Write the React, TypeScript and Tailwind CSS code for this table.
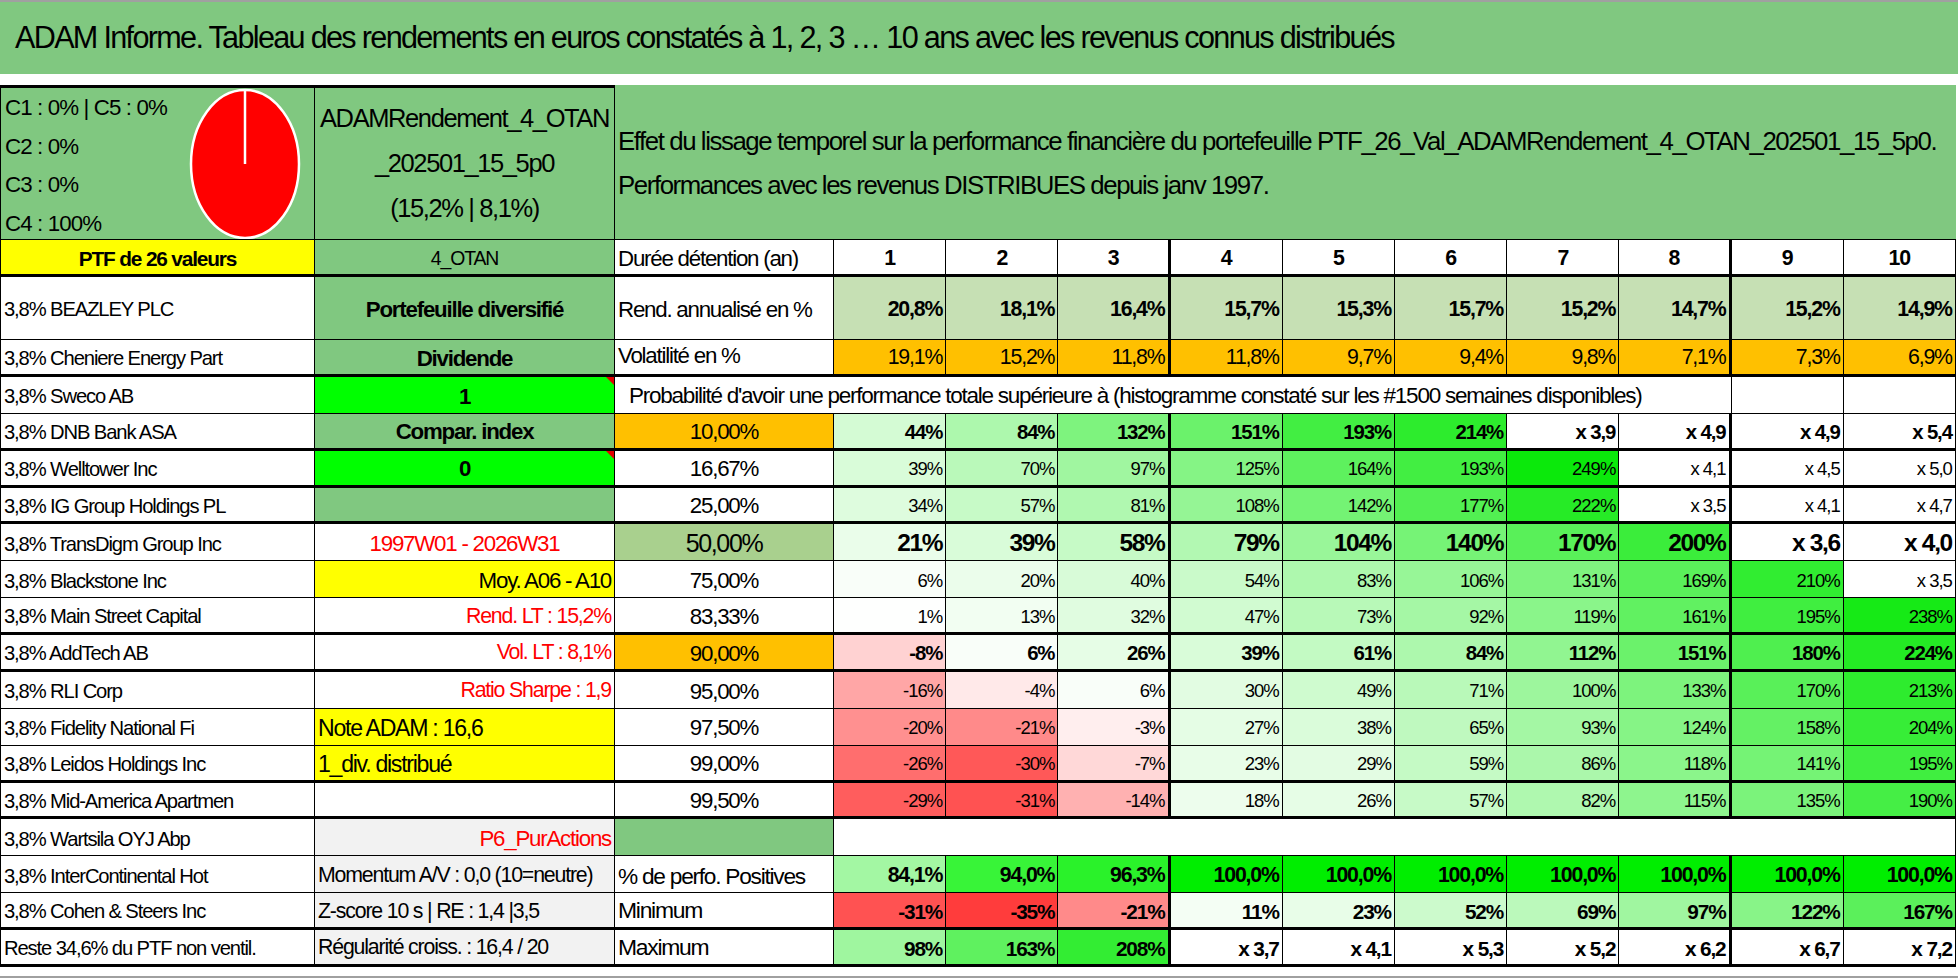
import React from 'react';

const GREEN = 'bg-[#80c880]';

type HeatRow = {
  name: string;
  c2: string;
  c2cls: string;
  tri?: boolean;
  p: string;
  pcls: string;
  vals: string[];
  bold?: boolean;
  big?: boolean;
  thick: boolean;
};

const heatRows: HeatRow[] = [
  { name: '3,8% DNB Bank ASA', c2: 'Compar. index', c2cls: 'bg-[#80c880] justify-center font-bold text-[22.3px]', p: '10,00%', pcls: 'bg-[#ffc000] text-[22.3px]', vals: ['44%', '84%', '132%', '151%', '193%', '214%', 'x 3,9', 'x 4,9', 'x 4,9', 'x 5,4'], bold: true, thick: true },
  { name: '3,8% Welltower Inc', c2: '0', c2cls: 'bg-[#00ff00] justify-center font-bold text-[22.3px]', tri: true, p: '16,67%', pcls: 'bg-white text-[22.3px]', vals: ['39%', '70%', '97%', '125%', '164%', '193%', '249%', 'x 4,1', 'x 4,5', 'x 5,0'], thick: true },
  { name: '3,8% IG Group Holdings PL', c2: '', c2cls: 'bg-[#80c880]', p: '25,00%', pcls: 'bg-white text-[22.3px]', vals: ['34%', '57%', '81%', '108%', '142%', '177%', '222%', 'x 3,5', 'x 4,1', 'x 4,7'], thick: true },
  { name: '3,8% TransDigm Group Inc', c2: '1997W01 - 2026W31', c2cls: 'bg-white justify-center text-[#ff0000] text-[22.3px]', p: '50,00%', pcls: 'bg-[#a9d08e] text-[25px]', vals: ['21%', '39%', '58%', '79%', '104%', '140%', '170%', '200%', 'x 3,6', 'x 4,0'], bold: true, big: true, thick: false },
  { name: '3,8% Blackstone Inc', c2: 'Moy. A06 - A10', c2cls: 'bg-[#ffff00] justify-end pr-[3px] text-[22.3px]', p: '75,00%', pcls: 'bg-white text-[22.3px]', vals: ['6%', '20%', '40%', '54%', '83%', '106%', '131%', '169%', '210%', 'x 3,5'], thick: false },
  { name: '3,8% Main Street Capital', c2: 'Rend. LT : 15,2%', c2cls: 'bg-white justify-end pr-[3px] text-[#ff0000] text-[21.3px]', p: '83,33%', pcls: 'bg-white text-[22.3px]', vals: ['1%', '13%', '32%', '47%', '73%', '92%', '119%', '161%', '195%', '238%'], thick: true },
  { name: '3,8% AddTech AB', c2: 'Vol. LT : 8,1%', c2cls: 'bg-white justify-end pr-[3px] text-[#ff0000] text-[21.3px]', p: '90,00%', pcls: 'bg-[#ffc000] text-[22.3px]', vals: ['-8%', '6%', '26%', '39%', '61%', '84%', '112%', '151%', '180%', '224%'], bold: true, thick: true },
  { name: '3,8% RLI Corp', c2: 'Ratio Sharpe : 1,9', c2cls: 'bg-white justify-end pr-[3px] text-[#ff0000] text-[21.3px]', p: '95,00%', pcls: 'bg-white text-[22.3px]', vals: ['-16%', '-4%', '6%', '30%', '49%', '71%', '100%', '133%', '170%', '213%'], thick: false },
  { name: '3,8% Fidelity National Fi', c2: 'Note ADAM : 16,6', c2cls: 'bg-[#ffff00] justify-start pl-[3px] text-[23.1px]', p: '97,50%', pcls: 'bg-white text-[22.3px]', vals: ['-20%', '-21%', '-3%', '27%', '38%', '65%', '93%', '124%', '158%', '204%'], thick: false },
  { name: '3,8% Leidos Holdings Inc', c2: '1_div. distribué', c2cls: 'bg-[#ffff00] justify-start pl-[3px] text-[23.1px]', p: '99,00%', pcls: 'bg-white text-[22.3px]', vals: ['-26%', '-30%', '-7%', '23%', '29%', '59%', '86%', '118%', '141%', '195%'], thick: true },
  { name: '3,8% Mid-America Apartmen', c2: '', c2cls: 'bg-white', p: '99,50%', pcls: 'bg-white text-[22.3px]', vals: ['-29%', '-31%', '-14%', '18%', '26%', '57%', '82%', '115%', '135%', '190%'], thick: true },
];

const positives = ['84,1%', '94,0%', '96,3%', '100,0%', '100,0%', '100,0%', '100,0%', '100,0%', '100,0%', '100,0%'];
const positiveColors = ['#a3f7a3', '#38f438', '#2af22a', '#00ee00', '#00ee00', '#00ee00', '#00ee00', '#00ee00', '#00ee00', '#00ee00'];
const minimum = ['-31%', '-35%', '-21%', '11%', '23%', '52%', '69%', '97%', '122%', '167%'];
const maximum = ['98%', '163%', '208%', 'x 3,7', 'x 4,1', 'x 5,3', 'x 5,2', 'x 6,2', 'x 6,7', 'x 7,2'];
const rendements = ['20,8%', '18,1%', '16,4%', '15,7%', '15,3%', '15,7%', '15,2%', '14,7%', '15,2%', '14,9%'];
const volatilites = ['19,1%', '15,2%', '11,8%', '11,8%', '9,7%', '9,4%', '9,8%', '7,1%', '7,3%', '6,9%'];

// couleur de fond façon "échelle de couleurs" Excel
const heat = (s: string) => {
  if (s.startsWith('x')) return '#ffffff';
  const v = parseFloat(s.replace(',', '.'));
  if (v < 0) {
    const t = Math.min(-v / 35, 1);
    const g = Math.round(255 - 195 * t);
    return `rgb(255,${g},${g})`;
  }
  const t = Math.min(v / 250, 1);
  const rb = Math.round(255 * (1 - t * 0.96));
  return `rgb(${rb},${Math.round(255 - 22 * t)},${rb})`;
};

const Cell = ({ className = '', thick = false, thickR = false, children, style }: { className?: string; thick?: boolean; thickR?: boolean; children?: React.ReactNode; style?: React.CSSProperties }) => (
  <div
    style={style}
    className={`relative flex items-center overflow-hidden whitespace-nowrap pt-[3px] tracking-[-0.055em] border-black ${thick ? 'border-b-[3px]' : 'border-b'} ${thickR ? 'border-r-[3px]' : 'border-r'} ${className}`}
  >
    {children}
  </div>
);

const Triangle = () => (
  <svg className="absolute right-0 top-0" width="8" height="8" viewBox="0 0 8 8">
    <polygon points="0,0 8,0 8,8" fill="#e00000" />
  </svg>
);

const NumCells = ({ vals, colors, bg, textCls, thick }: { vals: string[]; colors?: string[]; bg?: string; textCls: string; thick: boolean }) => (
  <>
    {vals.map((v, i) => (
      <Cell
        key={i}
        thick={thick}
        thickR={i === 2 || i === 7}
        className={`justify-end pr-[3px] ${bg ?? ''} ${textCls}`}
        style={colors ? { backgroundColor: colors[i] } : undefined}
      >
        {v}
      </Cell>
    ))}
  </>
);

const Pie = () => (
  <svg width="112" height="152" viewBox="0 0 112 152" className="mr-[13px]">
    <ellipse cx="56" cy="76" rx="54" ry="74" fill="#ff0000" stroke="#ffffff" strokeWidth="2.5" />
    <line x1="56" y1="2" x2="56" y2="76" stroke="#ffffff" strokeWidth="2.5" />
  </svg>
);

export default function App() {
  return (
    <div className="w-[1958px] h-[979px] bg-white text-black overflow-hidden font-['Liberation_Sans',Arial,sans-serif]">
      <div className="h-[2px] bg-[#a0a0a0]" />
      <div className={`h-[72px] ${GREEN} flex items-center pl-[15px] text-[30.6px] tracking-[-0.055em] whitespace-nowrap`}>
        ADAM Informe. Tableau des rendements en euros constatés à 1, 2, 3 … 10 ans avec les revenus connus distribués
      </div>
      <div className="h-[11px] bg-white" />

      <div className="grid w-[1956px] grid-cols-[315px_300px_219px_repeat(10,112.2px)] grid-rows-[155px_37px_63px_repeat(17,36.88px)]">
        {/* Bloc d'en-tête */}
        <Cell className={`${GREEN} border-t-[3px] border-l justify-between items-start !pt-0`}>
          <div className="flex flex-col pl-[4px] pt-[1px] text-[22.3px] leading-[38.5px]">
            <div>C1 : 0% | C5 : 0%</div>
            <div>C2 : 0%</div>
            <div>C3 : 0%</div>
            <div>C4 : 100%</div>
          </div>
          <div className="flex items-center self-center">
            <Pie />
          </div>
        </Cell>
        <Cell className={`${GREEN} border-t-[3px] justify-center text-center text-[25.5px] leading-[45px] !pt-0`}>
          <div>
            ADAMRendement_4_OTAN
            <br />
            _202501_15_5p0
            <br />
            (15,2% | 8,1%)
          </div>
        </Cell>
        <div className={`col-span-11 ${GREEN} flex flex-col justify-center pl-[3px] pt-[2px] text-[25.8px] leading-[44px] tracking-[-0.055em] whitespace-nowrap border-b border-black`}>
          <div>Effet du lissage temporel sur la performance financière du portefeuille PTF_26_Val_ADAMRendement_4_OTAN_202501_15_5p0.</div>
          <div>Performances avec les revenus DISTRIBUES depuis janv 1997.</div>
        </div>

        {/* Durée de détention */}
        <Cell thick className="bg-[#ffff00] border-l justify-center font-bold text-[20.8px]">PTF de 26 valeurs</Cell>
        <Cell thick className={`${GREEN} justify-center text-[19.4px]`}>4_OTAN</Cell>
        <Cell thick className="bg-white pl-[3px] text-[22.3px]">Durée détention (an)</Cell>
        {Array.from({ length: 10 }, (_, i) => (
          <Cell key={i} thick thickR={i === 2 || i === 7} className="bg-white justify-center font-bold text-[21.3px]">
            {i + 1}
          </Cell>
        ))}

        {/* Rendement annualisé */}
        <Cell className="bg-white border-l pl-[3px] text-[20.2px]">3,8% BEAZLEY PLC</Cell>
        <Cell className={`${GREEN} justify-center font-bold text-[22.3px]`}>Portefeuille diversifié</Cell>
        <Cell className="bg-white pl-[3px] text-[22.3px]">Rend. annualisé en %</Cell>
        <NumCells vals={rendements} bg="bg-[#c6e0b4]" textCls="font-bold text-[21.3px]" thick={false} />

        {/* Volatilité */}
        <Cell thick className="bg-white border-l pl-[3px] text-[20.2px]">3,8% Cheniere Energy Part</Cell>
        <Cell thick className={`${GREEN} justify-center font-bold text-[22.3px]`}>Dividende</Cell>
        <Cell thick className="bg-white pl-[3px] text-[22.3px] items-end pb-[1px]">Volatilité en %</Cell>
        <NumCells vals={volatilites} bg="bg-[#ffc000]" textCls="text-[21.3px] items-end" thick />

        {/* Probabilité */}
        <Cell className="bg-white border-l pl-[3px] text-[20.2px]">3,8% Sweco AB</Cell>
        <Cell className="bg-[#00ff00] justify-center font-bold text-[22.3px]">
          1
          <Triangle />
        </Cell>
        <Cell className="col-span-9 bg-white pl-[14px] text-[22.5px]">
          Probabilité d&apos;avoir une performance totale supérieure à (histogramme constaté sur les #1500 semaines disponibles)
        </Cell>
        <Cell className="bg-white" />
        <Cell className="bg-white" />

        {heatRows.map((r) => (
          <React.Fragment key={r.name}>
            <Cell thick={r.thick} className="bg-white border-l pl-[3px] text-[20.2px]">{r.name}</Cell>
            <Cell thick={r.thick} className={r.c2cls}>
              {r.c2}
              {r.tri && <Triangle />}
            </Cell>
            <Cell thick={r.thick} className={`justify-center ${r.pcls}`}>{r.p}</Cell>
            <NumCells
              vals={r.vals}
              colors={r.vals.map(heat)}
              textCls={r.big ? 'font-bold text-[24.5px]' : r.bold ? 'font-bold text-[20.4px]' : 'text-[18.5px]'}
              thick={r.thick}
            />
          </React.Fragment>
        ))}

        {/* Wartsila */}
        <Cell className="bg-white border-l pl-[3px] text-[20.2px]">3,8% Wartsila OYJ Abp</Cell>
        <Cell className="bg-[#f2f2f2] justify-end pr-[3px] text-[#ff0000] text-[22.3px]">P6_PurActions</Cell>
        <Cell className={GREEN} />
        <Cell className="col-span-10 bg-white" />

        {/* % positives */}
        <Cell className="bg-white border-l pl-[3px] text-[20.2px]">3,8% InterContinental Hot</Cell>
        <Cell className="bg-[#f2f2f2] pl-[3px] text-[21.3px]">Momentum A/V : 0,0 (10=neutre)</Cell>
        <Cell className="bg-white pl-[3px] text-[22.7px]">% de perfo. Positives</Cell>
        <NumCells vals={positives} colors={positiveColors} textCls="font-bold text-[21.3px]" thick={false} />

        {/* Minimum */}
        <Cell thick className="bg-white border-l pl-[3px] text-[20.2px]">3,8% Cohen &amp; Steers Inc</Cell>
        <Cell thick className="bg-[#f2f2f2] pl-[3px] text-[21.3px]">Z-score 10 s | RE : 1,4 |3,5</Cell>
        <Cell thick className="bg-white pl-[3px] text-[22.9px] items-end">Minimum</Cell>
        <NumCells vals={minimum} colors={minimum.map(heat)} textCls="font-bold text-[20.8px]" thick />

        {/* Maximum */}
        <Cell thick className="bg-white border-l pl-[3px] text-[20.2px]">Reste 34,6% du PTF non ventil.</Cell>
        <Cell thick className="bg-[#f2f2f2] pl-[3px] text-[21.3px]">Régularité croiss. : 16,4 / 20</Cell>
        <Cell thick className="bg-white pl-[3px] text-[22.9px] items-end">Maximum</Cell>
        <NumCells vals={maximum} colors={maximum.map(heat)} textCls="font-bold text-[20.8px]" thick />
      </div>

      <div className="h-[9px]" />
      <div className="h-[2px] bg-[#a0a0a0]" />
    </div>
  );
}
